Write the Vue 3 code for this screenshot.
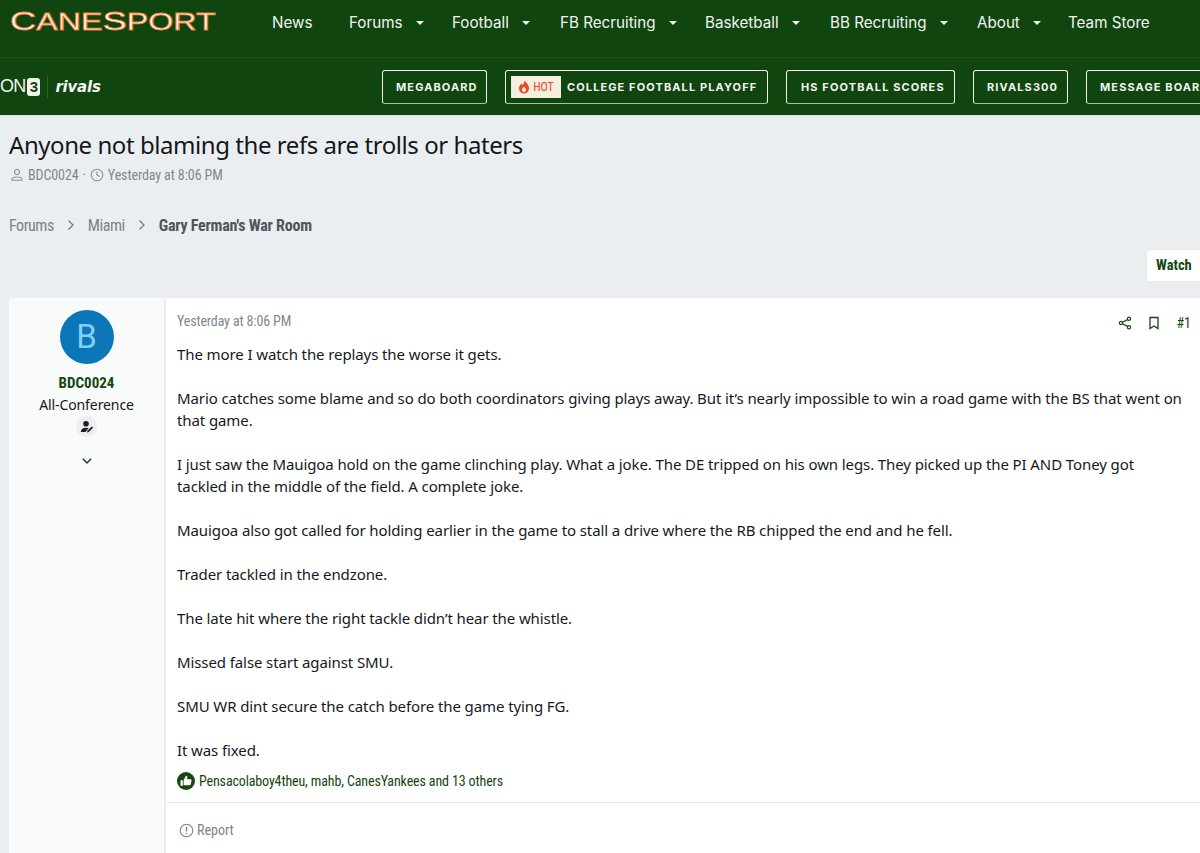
<template>
  <div class="page">
    <header class="top-bar">
      <div class="logo"><span class="big">C</span>ANE<span class="big">S</span>PORT</div>
      <nav class="main-nav">
        <a v-for="item in navItems" :key="item.label" class="nav-link" :class="item.cls">
          {{ item.label }}
          <i v-if="item.menu" class="caret"></i>
        </a>
      </nav>
    </header>

    <div class="sub-bar">
      <div class="brand">
        <span class="on3">ON<b>3</b></span>
        <span class="brand-line"></span>
        <span class="rivals">rivals</span>
      </div>
      <div class="pills">
        <a class="pill pill-mega">MEGABOARD</a>
        <a class="pill pill-hot">
          <span class="hot">
            <svg width="12" height="14" viewBox="0 0 12 14"><path d="M6.3.6c.4 2.200-.9 3.300-2 4.600-.3-.6-.5-1-.6-1.600C2 4.900 1 6.500 1 8.300 1 11.200 3.200 13.400 6 13.400s5-2.200 5-5c0-3.300-2.500-5.400-4.700-7.800z" fill="#f0431f"/><path d="M6 12c-1.200 0-2.100-.9-2.100-2 0-1.200 1-2 2.100-3.400C7.100 8 8.100 8.800 8.100 10c0 1.100-.9 2-2.100 2z" fill="#f5efdf"/></svg>
            HOT
          </span>
          COLLEGE FOOTBALL PLAYOFF
        </a>
        <a class="pill pill-hs">HS FOOTBALL SCORES</a>
        <a class="pill pill-rivals">RIVALS300</a>
        <a class="pill pill-msg">MESSAGE BOARDS</a>
      </div>
    </div>

    <div class="title-block">
      <h1>Anyone not blaming the refs are trolls or haters</h1>
      <div class="meta">
        <svg class="meta-user" width="14" height="14" viewBox="0 0 14 14" fill="none" stroke="#8c939c" stroke-width="1.100"><circle cx="7" cy="4" r="2.500"/><path d="M2 12.200v-1c0-1.300 2-2.200 5-2.200s5 .9 5 2.200v1z"/></svg>
        <span>BDC0024</span>
        <span class="dot">·</span>
        <svg width="14" height="14" viewBox="0 0 14 14" fill="none" stroke="#8c939c" stroke-width="1.100"><circle cx="7" cy="7" r="5.800"/><path d="M7 3.500V7l2.500 1.500"/></svg>
        <span>Yesterday at 8:06 PM</span>
      </div>
    </div>

    <div class="crumbs">
      <span>Forums</span>
      <svg class="chev" width="8" height="12" viewBox="0 0 8 12" fill="none" stroke="#6f7780" stroke-width="1.200"><path d="M1.500 1.500 6 6l-4.500 4.500"/></svg>
      <span>Miami</span>
      <svg class="chev" width="8" height="12" viewBox="0 0 8 12" fill="none" stroke="#6f7780" stroke-width="1.200"><path d="M1.500 1.500 6 6l-4.500 4.500"/></svg>
      <b>Gary Ferman's War Room</b>
    </div>

    <div class="actions">
      <a class="watch">Watch</a>
    </div>

    <article class="post">
      <aside class="user">
        <div class="avatar">B</div>
        <div class="username">BDC0024</div>
        <div class="rank">All-Conference</div>
        <div class="badge">
          <svg width="14" height="14" viewBox="0 0 14 14" fill="#1c1f22"><circle cx="6" cy="3.800" r="2.800"/><path d="M.8 12c0-2.800 2.200-4.300 5.200-4.300 1 0 1.900.2 2.600.5L5.500 12z"/><path d="M7 12.500l.5-1.800 4.300-4.200 1.300 1.300-4.300 4.200z"/></svg>
        </div>
        <svg class="expand" width="12" height="8" viewBox="0 0 12 8" fill="none" stroke="#14480f" stroke-width="1.500"><path d="M1.800 1.800 6 6l4.200-4.200"/></svg>
      </aside>
      <div class="post-main">
        <div class="post-head">
          <span class="post-date">Yesterday at 8:06 PM</span>
          <div class="post-tools">
            <svg width="14" height="14" viewBox="0 0 14 14" fill="none" stroke="#14480f" stroke-width="1.200"><circle cx="11" cy="2.800" r="1.600"/><circle cx="3" cy="7" r="1.600"/><circle cx="11" cy="11.200" r="1.600"/><path d="M4.500 6.200 9.500 3.600M4.500 7.800l5 2.600"/></svg>
            <svg width="12" height="14" viewBox="0 0 12 14" fill="none" stroke="#14480f" stroke-width="1.300"><path d="M2 1.500h8v11L6 10l-4 2.500z"/></svg>
            <span class="post-num">#1</span>
          </div>
        </div>
        <div class="post-body">
          <p v-for="(para, i) in paragraphs" :key="i">{{ para }}</p>
        </div>
        <div class="likes">
          <svg width="18" height="18" viewBox="0 0 18 18"><circle cx="9" cy="9" r="9" fill="#14480f"/><path d="M3.500 8.300h2.300v5.500H3.500zM6.600 8.300l2.300-4.500c1 0 1.600.7 1.500 1.700l-.3 1.700h3.400c.7 0 1.100.6 1 1.200l-.8 4c-.1.500-.5.800-1 .8H6.600z" fill="#fff"/></svg>
          <span>Pensacolaboy4theu, mahb, CanesYankees and 13 others</span>
        </div>
        <div class="post-foot">
          <svg width="15" height="15" viewBox="0 0 15 15" fill="none" stroke="#7b828c" stroke-width="1.100"><circle cx="7.500" cy="7.500" r="6.300"/><path d="M7.500 3.800v4.600M7.500 10v1.300" stroke-width="1.400"/></svg>
          <span>Report</span>
        </div>
      </div>
    </article>
  </div>
</template>

<script setup>
const navItems = [
  { label: 'News', cls: 'n-news' },
  { label: 'Forums', menu: true, cls: 'n-forums' },
  { label: 'Football', menu: true, cls: 'n-football' },
  { label: 'FB Recruiting', menu: true, cls: 'n-fb' },
  { label: 'Basketball', menu: true, cls: 'n-bball' },
  { label: 'BB Recruiting', menu: true, cls: 'n-bb' },
  { label: 'About', menu: true, cls: 'n-about' },
  { label: 'Team Store', cls: 'n-store' }
]

const paragraphs = [
  'The more I watch the replays the worse it gets.',
  'Mario catches some blame and so do both coordinators giving plays away. But it’s nearly impossible to win a road game with the BS that went on that game.',
  'I just saw the Mauigoa hold on the game clinching play. What a joke. The DE tripped on his own legs. They picked up the PI AND Toney got tackled in the middle of the field. A complete joke.',
  'Mauigoa also got called for holding earlier in the game to stall a drive where the RB chipped the end and he fell.',
  'Trader tackled in the endzone.',
  'The late hit where the right tackle didn’t hear the whistle.',
  'Missed false start against SMU.',
  'SMU WR dint secure the catch before the game tying FG.',
  'It was fixed.'
]
</script>

<style>
html, body {
  margin: 0;
  overflow: hidden;
}
</style>

<style scoped>
.page {
  width: 1200px;
  height: 853px;
  overflow: hidden;
  background: #ebeef1;
  font-family: "Noto Sans", sans-serif;
  color: #16191c;
}

.top-bar {
  height: 57px;
  background: #11450f;
  border-bottom: 1px solid #1d5519;
  display: flex;
  align-items: flex-start;
}

.logo {
  margin: 4px 0 0 10px;
  flex: none;
  width: 262px;
  height: 34px;
  font-family: "Liberation Sans", sans-serif;
  font-size: 23px;
  line-height: 34px;
  color: #fff;
  -webkit-text-stroke: 0.8px #ee7a2c;
  white-space: nowrap;
  transform: scaleX(1.4);
  transform-origin: left center;
}

.logo .big {
  font-size: 26px;
}

.main-nav {
  display: flex;
  margin-top: 13px;
}

.nav-link {
  display: flex;
  align-items: center;
  height: 19px;
  font-family: Inter, sans-serif;
  font-size: 15.2px;
  color: #f1f4ef;
  white-space: nowrap;
}

.n-news { width: 77px; }
.n-forums { width: 103px; }
.n-football { width: 108px; }
.n-fb { width: 145px; }
.n-bball { width: 125px; }
.n-bb { width: 147px; }
.n-about { width: 91px; }

.caret {
  width: 0;
  height: 0;
  margin-left: 13px;
  border-left: 4px solid transparent;
  border-right: 4px solid transparent;
  border-top: 4px solid #f1f4ef;
}

.sub-bar {
  height: 57px;
  background: #11450f;
  border-bottom: 1px solid #dfe3e6;
  display: flex;
  align-items: center;
}

.brand {
  width: 382px;
  flex: none;
  display: flex;
  align-items: center;
  color: #f1f4ef;
}

.on3 {
  display: flex;
  align-items: center;
  font-family: "Liberation Sans", sans-serif;
  font-size: 18px;
  letter-spacing: -0.8px;
}

.on3 b {
  display: block;
  width: 13px;
  height: 18px;
  margin-left: 2px;
  background: #f1f4ef;
  color: #11450f;
  border-radius: 3px;
  font-size: 15px;
  line-height: 18px;
  letter-spacing: 0;
  text-align: center;
}

.brand-line {
  width: 1px;
  height: 22px;
  margin: 0 7px 0 7px;
  background: #2b6327;
}

.rivals {
  font-family: "DejaVu Sans", sans-serif;
  font-size: 15px;
  font-weight: 700;
  font-style: italic;
  letter-spacing: -0.2px;
}

.pills {
  display: flex;
  gap: 18px;
  flex: none;
}

.pill {
  box-sizing: border-box;
  height: 34px;
  display: flex;
  align-items: center;
  flex: none;
  padding-left: 13px;
  border: 1px solid #f1f4ef;
  border-bottom-color: #a9bda7;
  border-radius: 3px;
  font-family: Inter, sans-serif;
  font-size: 11px;
  font-weight: 700;
  letter-spacing: 1.1px;
  color: #f1f4ef;
  white-space: nowrap;
}

.pill-mega { width: 105px; }
.pill-hot { width: 263px; padding-left: 5px; }
.pill-hs { width: 169px; padding-left: 14px; }
.pill-rivals { width: 95px; }
.pill-msg { width: 150px; }

.hot {
  width: 50px;
  height: 22px;
  margin-right: 6px;
  display: flex;
  align-items: center;
  justify-content: center;
  gap: 3px;
  background: #f5efdf;
  color: #f0431f;
  font-family: Roboto, sans-serif;
  font-stretch: 75%;
  font-size: 12px;
  font-weight: 400;
  letter-spacing: 0;
}

.title-block {
  padding: 12px 9px 0;
}

h1 {
  margin: 0;
  font-size: 24px;
  font-weight: 400;
  line-height: 34px;
  letter-spacing: -0.44px;
  color: #14171a;
}

.meta {
  display: flex;
  align-items: center;
  gap: 4px;
  margin-top: 3px;
  height: 20px;
  font-family: Roboto, sans-serif;
  font-stretch: 75%;
  font-size: 14px;
  letter-spacing: -0.1px;
  color: #80878f;
}

.meta-user {
  margin-left: 1px;
}

.crumbs {
  display: flex;
  align-items: center;
  margin: 30px 0 0 9px;
  height: 20px;
  font-family: Roboto, sans-serif;
  font-stretch: 75%;
  font-size: 16px;
  letter-spacing: -0.45px;
  color: #7b828b;
}

.crumbs b {
  letter-spacing: -0.22px;
  color: #4e555c;
}

.chev {
  margin: 0 13px;
}

.actions {
  display: flex;
  justify-content: flex-end;
  margin-top: 14px;
  margin-right: -12px;
}

.watch {
  box-sizing: border-box;
  width: 66px;
  height: 33px;
  padding: 7px 0 0 9px;
  background: #fff;
  border-radius: 4px;
  border: 1px solid #e6e9ec;
  font-family: Roboto, sans-serif;
  font-stretch: 75%;
  font-size: 14.5px;
  font-weight: 700;
  color: #14480f;
}

.post {
  display: flex;
  margin: 16px 0 0 9px;
  background: #fff;
  border-radius: 4px 0 0 0;
  height: 560px;
}

.user {
  width: 157px;
  flex: none;
  box-sizing: border-box;
  border-right: 2px solid #eceef0;
  background: #f9fafa;
  border-radius: 4px 0 0 0;
  display: flex;
  flex-direction: column;
  align-items: center;
  padding-top: 12px;
}

.avatar {
  width: 54px;
  height: 54px;
  border-radius: 50%;
  background: #0b76b8;
  color: #7fd0fa;
  font-family: Roboto, sans-serif;
  font-size: 33px;
  line-height: 54px;
  text-align: center;
}

.username {
  margin-top: 9px;
  font-family: Roboto, sans-serif;
  font-stretch: 75%;
  font-size: 15px;
  font-weight: 700;
  line-height: 20px;
  color: #14480f;
}

.rank {
  margin-top: 1px;
  font-size: 14px;
  line-height: 21px;
  letter-spacing: -0.1px;
  color: #16191c;
}

.badge {
  width: 21px;
  height: 21px;
  margin-top: 1px;
  border-radius: 50%;
  background: #eceef0;
  display: flex;
  align-items: center;
  justify-content: center;
}

.expand {
  margin-top: 20px;
}

.post-main {
  flex: 1;
  min-width: 0;
}

.post-head {
  display: flex;
  justify-content: space-between;
  align-items: center;
  height: 18px;
  padding: 14px 9px 0 11px;
}

.post-date {
  font-family: Roboto, sans-serif;
  font-stretch: 75%;
  font-size: 14px;
  letter-spacing: -0.14px;
  color: #80878f;
}

.post-tools {
  display: flex;
  align-items: center;
  gap: 16px;
  margin-top: 4px;
  font-family: Roboto, sans-serif;
  font-stretch: 75%;
  font-size: 14px;
  color: #14480f;
}

.post-body {
  padding: 13px 17px 0 11px;
  font-size: 15px;
  line-height: 22px;
  letter-spacing: -0.1px;
  color: #16191c;
}

.post-body p {
  margin: 0 0 22px;
}

.post-body p:last-child {
  margin-bottom: 0;
}

.likes {
  display: flex;
  align-items: center;
  gap: 4px;
  margin: 10px 0 0 11px;
  height: 20px;
  font-family: Roboto, sans-serif;
  font-stretch: 75%;
  font-size: 14px;
  letter-spacing: -0.13px;
  color: #14480f;
}

.post-foot {
  display: flex;
  align-items: center;
  gap: 3px;
  margin-top: 11px;
  border-top: 1px solid #e3e5e8;
  padding: 19px 0 0 13px;
  font-family: Roboto, sans-serif;
  font-stretch: 75%;
  font-size: 14px;
  color: #7b828c;
}
</style>
